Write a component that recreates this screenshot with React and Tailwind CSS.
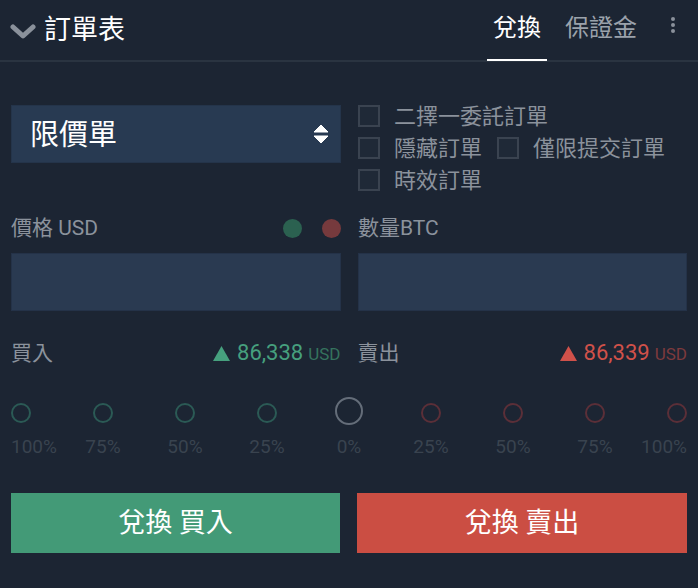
import React from "react";

const font = { fontFamily: "Roboto, 'Noto Sans CJK TC', sans-serif" };

function Check({ label }) {
  return (
    <div className="flex items-center h-[22px]">
      <div className="w-[22px] h-[22px] border-2 border-[#3a4350] bg-[#1f2937] shrink-0" />
      <span className="ml-[14px] text-[22px] leading-none text-[#8b929c] mt-[2px]">{label}</span>
    </div>
  );
}

const pcts = [
  { t: "100%", c: "green" },
  { t: "75%", c: "green" },
  { t: "50%", c: "green" },
  { t: "25%", c: "green" },
  { t: "0%", c: "mid" },
  { t: "25%", c: "red" },
  { t: "50%", c: "red" },
  { t: "75%", c: "red" },
  { t: "100%", c: "red" },
];

export default function App() {
  return (
    <div style={font} className="w-[698px] h-[588px] bg-[#1c2533] overflow-hidden">
      {/* header */}
      <div className="h-[62px] border-b-2 border-[#2a3441] flex items-center pl-[10px] pr-[10px] relative">
        <svg width="26" height="16" viewBox="0 0 26 16" className="mt-[4px]">
          <path d="M3 3 L13 12 L23 3" fill="none" stroke="#8a919b" strokeWidth="5" strokeLinecap="round" strokeLinejoin="round" />
        </svg>
        <span className="ml-[8px] text-[27px] text-white leading-none">訂單表</span>
        <div className="ml-auto flex h-full items-stretch">
          <div className="relative w-[60px] flex items-center justify-center">
            <span className="text-[24px] text-white leading-none -mt-[4px]">兌換</span>
            <div className="absolute left-0 right-0 bottom-[-1px] h-[2px] bg-white" />
          </div>
          <div className="flex items-center ml-[18px]">
            <span className="text-[24px] text-[#9ba2ab] leading-none -mt-[4px]">保證金</span>
          </div>
          <div className="flex flex-col gap-[2px] ml-[34px] mr-[13px] mt-[17px]">
            <div className="w-[4px] h-[4px] rounded-full bg-[#8a919b]" />
            <div className="w-[4px] h-[4px] rounded-full bg-[#8a919b]" />
            <div className="w-[4px] h-[4px] rounded-full bg-[#8a919b]" />
          </div>
        </div>
      </div>

      {/* body */}
      <div className="px-[11px]">
        <div className="flex gap-[17px] mt-[43px]">
          <div className="w-[330px] h-[58px] bg-[#283a52] border border-[#24344a] flex items-center pl-[18px] pr-[11px]">
            <span className="text-[29px] text-white leading-none mt-[2px]">限價單</span>
            <svg width="16" height="22" viewBox="0 0 16 22" className="ml-auto">
              <path d="M8 2 L15 9 L1 9 Z" fill="white" strokeLinejoin="round" stroke="white" strokeWidth="1" />
              <path d="M8 20 L15 13 L1 13 Z" fill="white" strokeLinejoin="round" stroke="white" strokeWidth="1" />
            </svg>
          </div>
          <div className="flex flex-col gap-[10px]">
            <Check label="二擇一委託訂單" />
            <div className="flex gap-[15px]">
              <Check label="隱藏訂單" />
              <Check label="僅限提交訂單" />
            </div>
            <Check label="時效訂單" />
          </div>
        </div>

        {/* labels */}
        <div className="flex gap-[17px] mt-[25px] h-[24px] items-center">
          <div className="w-[330px] flex items-center">
            <span className="text-[21px] text-[#8b929c] leading-none">價格 USD</span>
            <div className="ml-auto w-[19px] h-[19px] rounded-full bg-[#2b6150]" />
            <div className="ml-[20px] w-[19px] h-[19px] rounded-full bg-[#763a3d]" />
          </div>
          <span className="text-[21px] text-[#8b929c] leading-none">數量BTC</span>
        </div>

        {/* inputs */}
        <div className="flex gap-[17px] mt-[13px]">
          <div className="w-[330px] h-[58px] bg-[#2a3a51] border border-[#243248]" />
          <div className="w-[330px] h-[58px] bg-[#2a3a51] border border-[#243248]" />
        </div>

        {/* prices */}
        <div className="flex gap-[17px] mt-[30px] h-[24px] items-center">
          <div className="w-[330px] flex items-center">
            <span className="text-[21px] text-[#8b929c] leading-none">買入</span>
            <svg width="17" height="15" viewBox="0 0 17 15" className="ml-auto">
              <path d="M8.5 0 L17 15 L0 15 Z" fill="#46a07e" />
            </svg>
            <span className="ml-[7px] text-[22px] text-[#46a07e] leading-none">86,338</span>
            <span className="ml-[5px] text-[17px] text-[#35735e] leading-none mt-[2px]">USD</span>
          </div>
          <div className="w-[330px] flex items-center">
            <span className="text-[21px] text-[#8b929c] leading-none">賣出</span>
            <svg width="17" height="15" viewBox="0 0 17 15" className="ml-auto">
              <path d="M8.5 0 L17 15 L0 15 Z" fill="#d0514a" />
            </svg>
            <span className="ml-[7px] text-[22px] text-[#d0514a] leading-none">86,339</span>
            <span className="ml-[5px] text-[17px] text-[#7d3a3d] leading-none mt-[2px]">USD</span>
          </div>
        </div>

        {/* slider */}
        <div className="mt-[32px] flex justify-between w-[676px] relative">
          {pcts.map((p, i) => {
            const isMid = p.c === "mid";
            const border =
              p.c === "green" ? "border-[#2b5a55]" : p.c === "red" ? "border-[#5b2f38]" : "border-[#646d79]";
            const align = i === 0 ? "items-start" : i === 8 ? "items-end" : "items-center";
            return (
              <div key={i} className={`flex flex-col ${align} w-[20px] relative`}>
                <div className="w-[20px] h-[28px] flex items-center justify-center">
                  <div
                    className={`${isMid ? "w-[28px] h-[28px]" : "w-[20px] h-[20px] mt-[4px]"} rounded-full border-2 ${border} shrink-0`}
                  />
                </div>
                <span
                  className={`absolute top-[40px] text-[19px] text-[#39434f] leading-none whitespace-nowrap ${
                    i === 0 ? "left-0" : i === 8 ? "right-0" : "left-1/2 -translate-x-1/2"
                  }`}
                >
                  {p.t}
                </span>
              </div>
            );
          })}
        </div>

        {/* buttons */}
        <div className="flex gap-[17px] mt-[68px]">
          <button className="w-[330px] h-[60px] bg-[#439a77] text-white text-[27px] flex items-center justify-center leading-none">
            兌換 買入
          </button>
          <button className="w-[331px] h-[60px] bg-[#cb4e43] text-white text-[27px] flex items-center justify-center leading-none">
            兌換 賣出
          </button>
        </div>
      </div>
    </div>
  );
}
